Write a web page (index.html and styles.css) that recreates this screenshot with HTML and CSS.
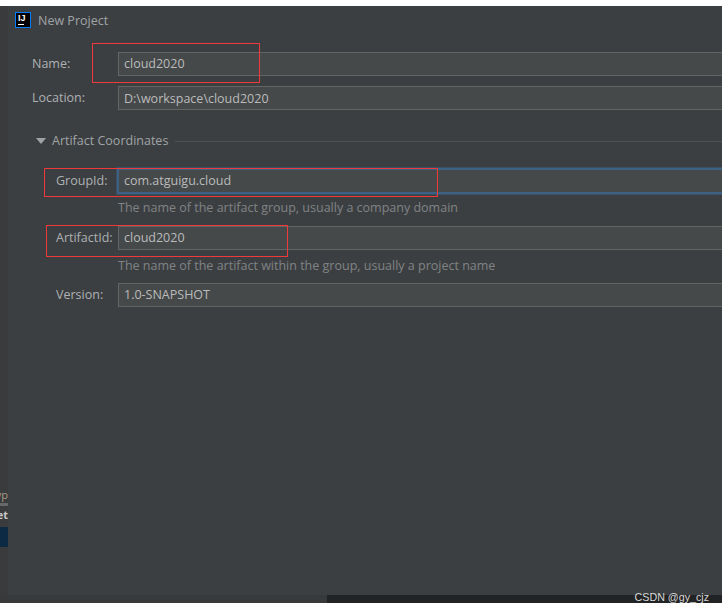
FILE: index.html
```html
<!DOCTYPE html>
<html lang="en">
<head>
<meta charset="utf-8">
<title>New Project</title>
<link rel="stylesheet" href="styles.css">
</head>
<body>
<div class="shot">
  <div class="backdrop">
    <div class="behind">
      <div class="behind-gap"></div>
      <div class="behind-text typ">yp</div>
      <div class="behind-rule"></div>
      <div class="behind-text bold">et</div>
      <div class="behind-sel"></div>
    </div>
    <main class="dialog">
      <header class="title">
        <svg class="logo" width="16" height="16" viewBox="0 0 16 16" aria-hidden="true">
          <rect x="0.5" y="0.5" width="15" height="15" fill="#000" stroke="#087cfa"/>
          <rect x="3" y="12" width="6" height="1" fill="#fff"/>
          <text x="3" y="8.5" class="logo-text">IJ</text>
        </svg>
        <span>New Project</span>
      </header>
      <div class="row first">
        <label class="lbl">Name:</label>
        <div class="field">cloud2020</div>
      </div>
      <div class="row second">
        <label class="lbl">Location:</label>
        <div class="field">D:\workspace\cloud2020</div>
      </div>
      <div class="section">
        <svg class="tri" width="10" height="6" viewBox="0 0 10 6" aria-hidden="true"><path d="M0 0h10L5 6z" fill="#a0a3a5"/></svg>
        <span>Artifact Coordinates</span>
        <div class="section-line"></div>
      </div>
      <div class="row group">
        <label class="lbl sub">GroupId:</label>
        <div class="field focus">com.atguigu.cloud</div>
      </div>
      <p class="hint">The name of the artifact group, usually a company domain</p>
      <div class="row artifact">
        <label class="lbl sub">ArtifactId:</label>
        <div class="field">cloud2020</div>
      </div>
      <p class="hint hint-low">The name of the artifact within the group, usually a project name</p>
      <div class="row version">
        <label class="lbl sub">Version:</label>
        <div class="field">1.0-SNAPSHOT</div>
      </div>
    </main>
    <div class="red r-name"></div>
    <div class="red r-group"></div>
    <div class="red r-artifact"></div>
  </div>
  <div class="bottom"><div class="bottom-light"></div><div class="bottom-dark"></div></div>
  <div class="watermark">CSDN @gy_cjz</div>
</div>
</body>
</html>
```
FILE: styles.css
```css
* { box-sizing: border-box; }
html, body { margin: 0; background: #fff; }
body { width: 725px; height: 614px; overflow: hidden; font-family: "Open Sans", "Noto Sans", sans-serif; }
.shot { position: relative; width: 722px; padding-top: 6px; }
.backdrop { position: relative; display: flex; height: 589px; }
.behind { width: 8px; flex: none; background: #393b3d; overflow: hidden; font-size: 11px; }
.behind-gap { height: 480px; }
.behind-text { height: 17px; line-height: 17px; direction: rtl; white-space: nowrap; }
.typ { color: #a89a86; }
.behind-rule { height: 3px; background: #66686a; }
.bold { font-weight: 700; color: #c8c8c8; height: 21px; }
.behind-sel { height: 20px; background: #0d2a45; }
.dialog { flex: 1; min-width: 0; background: #3c3f41; color: #adb1b4; font-size: 12.5px; overflow: hidden; }
.title { display: flex; align-items: center; gap: 7px; height: 28px; padding-left: 7px; color: #a0a4a7; }
.logo { flex: none; display: block; }
.logo-text { font: 700 9px "Liberation Sans", sans-serif; fill: #fff; }
.row { position: relative; display: flex; align-items: center; height: 24px; padding-left: 110px; }
.lbl { position: absolute; left: 24px; top: 3px; }
.lbl.sub { left: 48px; }
.field { flex: 1; height: 24px; line-height: 21px; padding-left: 5px; background: #45494a; border: 1px solid #646464; border-right: 0; color: #bbbbbb; white-space: nowrap; }
.second .field { line-height: 23px; }
.focus { border: 0; box-shadow: 0 0 0 2.5px #3d6185; height: 22px; margin-left: 1px; line-height: 22px; padding-left: 5px; }
.first { margin-top: 18px; }
.second { margin-top: 10px; }
.section { display: flex; align-items: center; height: 20px; margin-top: 21px; padding-left: 28px; gap: 6px; color: #a0a4a7; }
.section span { position: relative; top: -1px; }
.tri { flex: none; }
.section-line { flex: 1; height: 1px; background: #4f5254; margin-left: 1px; }
.group { margin-top: 18px; }
.hint { margin: 5px 0 0 110px; height: 20px; line-height: 20px; color: #808385; white-space: nowrap; }
.hint-low { margin-top: 6px; height: 19px; }
.artifact { margin-top: 8px; }
.version { margin-top: 8px; }
.red { position: absolute; border: 1px solid #f03a3a; }
.r-name { left: 92px; top: 37px; width: 168px; height: 40px; }
.r-group { left: 44px; top: 162px; width: 394px; height: 29px; }
.r-artifact { left: 46px; top: 219px; width: 242px; height: 32px; }
.bottom { display: flex; height: 8px; }
.bottom-light { width: 327px; background: #37393b; }
.bottom-dark { flex: 1; background: #222324; }
.watermark { position: absolute; right: 13px; top: 591px; font: 10.7px "Liberation Sans", sans-serif; color: #d8d8d8; }
```
